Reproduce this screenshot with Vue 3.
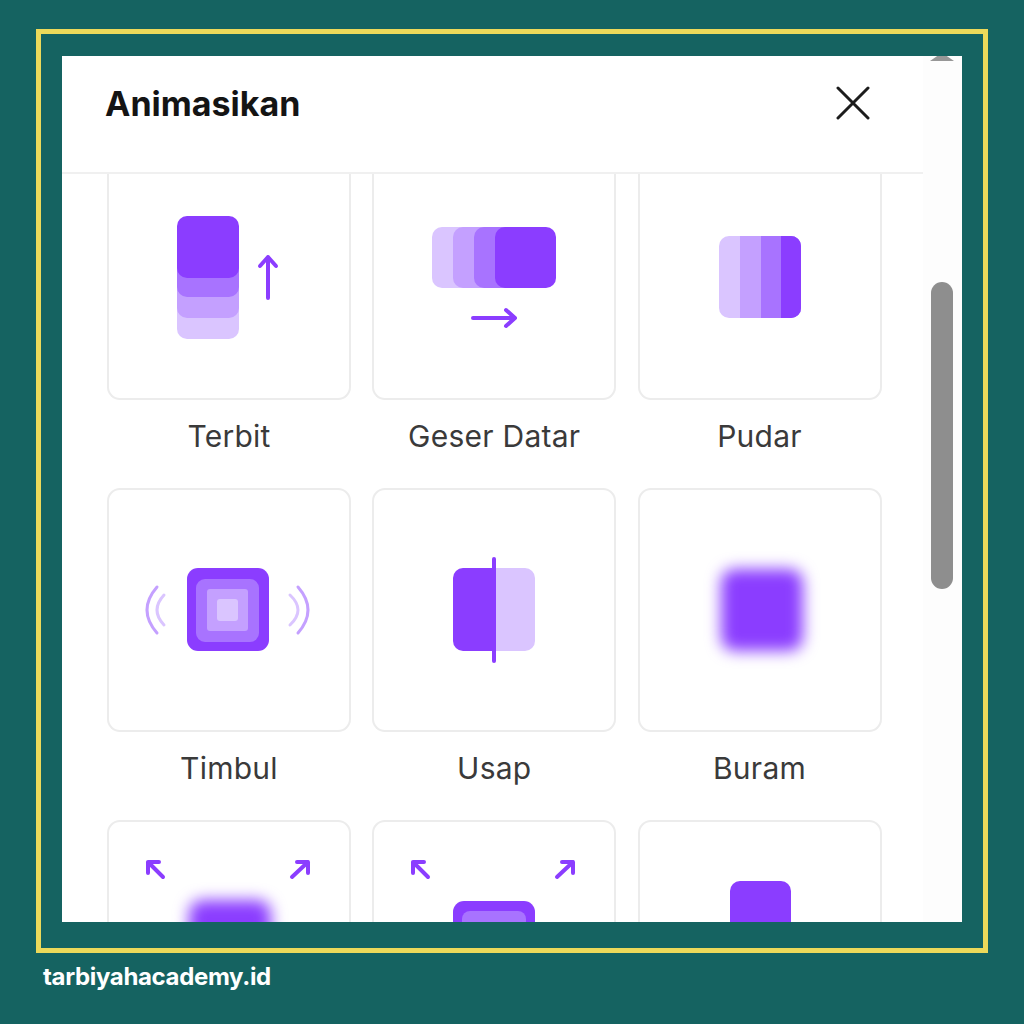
<template>
  <div class="page">
    <div class="frame">
      <div class="panel">
        <div class="main">
          <div class="header">
            <h1 class="title">Animasikan</h1>
            <svg class="close" viewBox="0 0 36 36" width="36" height="36">
              <path d="M3 2 L33 32 M33 2 L3 32" />
            </svg>
          </div>
          <div class="list">
            <div class="grid">
              <div v-for="item in items" :key="item.label" class="item">
                <div class="card">
                  <svg class="icon" viewBox="0 0 244 244" width="244" height="244">
                    <rect v-for="(r, i) in item.rects" :key="i" v-bind="r" />
                    <path v-for="(p, i) in item.paths" :key="i" v-bind="p" />
                  </svg>
                </div>
                <div v-if="item.label.length > 1" class="label">{{ item.label }}</div>
              </div>
            </div>
          </div>
        </div>
        <div class="track">
          <div class="track-arrow"></div>
          <div class="thumb"></div>
        </div>
      </div>
    </div>
    <div class="footer">tarbiyahacademy.id</div>
  </div>
</template>

<script setup>
const c1 = '#8b3dff'
const c2 = '#a873ff'
const c3 = '#c4a0ff'
const c4 = '#dac5ff'

const line = (d, stroke = c1, w = 4) => ({
  d,
  fill: 'none',
  stroke,
  'stroke-width': w,
  'stroke-linecap': 'round',
  'stroke-linejoin': 'round'
})
const box = (x, y, width, height, fill, rx = 10) => ({ x, y, width, height, fill, rx })

const outArrows = [
  line('M56 57 L41 42 M41 53 V42 H52'),
  line('M185 57 L201 42 M190 42 H201 V53')
]

const items = [
  {
    label: 'Terbit',
    rects: [box(70, 121, 62, 62, c4), box(70, 100, 62, 62, c3), box(70, 79, 62, 62, c2), box(70, 60, 62, 62, c1)],
    paths: [line('M161 142 V101 M153 110 L161 101 L169 110')]
  },
  {
    label: 'Geser Datar',
    rects: [box(60, 71, 61, 61, c4), box(81, 71, 61, 61, c3), box(102, 71, 61, 61, c2), box(123, 71, 61, 61, c1)],
    paths: [line('M101 162 H143 M134 154 L143 162 L134 170')]
  },
  {
    label: 'Pudar',
    rects: [box(81, 80, 82, 82, c4)],
    paths: [
      { d: 'M102 80 H153 A10 10 0 0 1 163 90 V152 A10 10 0 0 1 153 162 H102 Z', fill: c3 },
      { d: 'M123 80 H153 A10 10 0 0 1 163 90 V152 A10 10 0 0 1 153 162 H123 Z', fill: c2 },
      { d: 'M143 80 H153 A10 10 0 0 1 163 90 V152 A10 10 0 0 1 153 162 H143 Z', fill: c1 }
    ]
  },
  {
    label: 'Timbul',
    rects: [box(80, 80, 82, 83, c1, 11), box(89, 91, 63, 63, c2, 9), box(100, 101, 41, 42, c3, 3), box(110, 111, 21, 22, c4, 3)],
    paths: [
      line('M50 99 Q30 122 50 145', c3, 3),
      line('M57 107 Q43 122 57 137', c4, 3),
      line('M191 99 Q211 122 191 145', c3, 3),
      line('M183 107 Q199 122 183 137', c4, 3)
    ]
  },
  {
    label: 'Usap',
    rects: [],
    paths: [
      { d: 'M124 80 H153 A10 10 0 0 1 163 90 V153 A10 10 0 0 1 153 163 H124 Z', fill: c4 },
      { d: 'M124 80 H91 A10 10 0 0 0 81 90 V153 A10 10 0 0 0 91 163 H124 Z', fill: c1 },
      line('M122 71 V173')
    ]
  },
  {
    label: 'Buram',
    rects: [{ ...box(83, 81, 82, 82, c1, 14), class: 'blur' }],
    paths: []
  },
  {
    label: 'a',
    rects: [{ ...box(82, 80, 82, 82, c1, 14), class: 'blur' }],
    paths: outArrows
  },
  {
    label: 'b',
    rects: [box(81, 81, 82, 82, c1, 11), box(90, 91, 64, 64, c2, 8)],
    paths: outArrows
  },
  {
    label: 'c',
    rects: [box(92, 61, 61, 62, c1)],
    paths: []
  }
]
</script>

<style scoped>
.page {
  width: 1024px;
  height: 1024px;
  box-sizing: border-box;
  padding: 29px 0 0 36px;
  background: #156361;
  overflow: hidden;
}

.frame {
  width: 952px;
  height: 924px;
  box-sizing: border-box;
  border: 5px solid #ecd95a;
  padding: 22px 21px 26px 21px;
}

.panel {
  display: flex;
  height: 100%;
  background: #fff;
}

.main {
  width: 861px;
  display: flex;
  flex-direction: column;
}

.header {
  height: 118px;
  flex-shrink: 0;
  box-sizing: border-box;
  border-bottom: 2px solid #f0f0f0;
  display: flex;
  align-items: center;
  justify-content: space-between;
  padding: 0 52px 22px 43px;
}

.title {
  margin: 0;
  font-family: Inter, sans-serif;
  font-size: 34px;
  font-weight: 700;
  color: #141414;
}

.close {
  display: block;
  margin-top: 2px;
}

.close path {
  fill: none;
  stroke: #1c1c1c;
  stroke-width: 3;
  stroke-linecap: round;
}

.list {
  flex: 1;
  overflow: hidden;
  padding-left: 45px;
}

.grid {
  display: grid;
  grid-template-columns: repeat(3, 244px);
  column-gap: 21.25px;
  row-gap: 34px;
  margin-top: -18px;
}

.card {
  width: 244px;
  height: 244px;
  border-radius: 13px;
  box-shadow: inset 0 0 0 2px #ececec;
}

.icon {
  display: block;
  overflow: visible;
}

.blur {
  filter: blur(7.5px);
}

.label {
  height: 36px;
  margin-top: 18px;
  line-height: 36px;
  text-align: center;
  font-family: Inter, sans-serif;
  font-size: 30px;
  letter-spacing: 0.25px;
  color: #3a3a3a;
}

.track {
  width: 39px;
  box-sizing: border-box;
  padding-right: 1px;
  background: #fdfdfd;
  display: flex;
  flex-direction: column;
  align-items: center;
}

.track-arrow {
  width: 24px;
  height: 5px;
  background: #979797;
  clip-path: polygon(30% 0, 70% 0, 100% 100%, 0 100%);
}

.thumb {
  width: 22px;
  height: 307px;
  margin-top: 221px;
  border-radius: 11px;
  background: #8e8e8e;
}

.footer {
  margin: 10px 0 0 7px;
  font-family: Inter, sans-serif;
  font-size: 24px;
  font-weight: 700;
  letter-spacing: -0.34px;
  line-height: 27px;
  color: #fff;
}
</style>
